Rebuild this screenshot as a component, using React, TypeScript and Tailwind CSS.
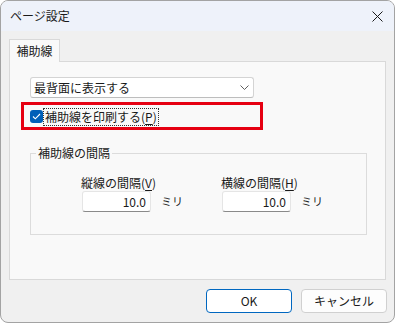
import React from "react";

const font = "font-['Noto_Sans_CJK_JP','Noto_Sans',sans-serif]";

const SpacingField: React.FC<{ label: string; accel: string; value: string }> = ({
  label,
  accel,
  value,
}) => (
  <div className="flex w-[140px] flex-col">
    <div className="ml-[-1px] h-[16px] text-[12px] leading-[16px] text-[#1a1a1a]">
      {label}(<span className="underline underline-offset-2">{accel}</span>)
    </div>
    <div className="flex items-center">
      <div className="flex h-[21px] w-[69px] items-center justify-end rounded-[3px] border border-[#e5e5e5] border-b-[#8a8a8a] bg-white pr-[4px] text-[12px] text-[#1a1a1a]">
        {value}
      </div>
      <span className="ml-[10px] text-[11px] text-[#1a1a1a]">ミリ</span>
    </div>
  </div>
);

const App: React.FC = () => {
  return (
    <div className={`h-[323px] w-[395px] bg-white ${font}`}>
      <div className="flex h-full flex-col overflow-hidden rounded-[8px] border border-[#a3a3a3] bg-[#f0f0f0]">
        {/* Title bar */}
        <div className="flex h-[30px] shrink-0 items-center justify-between bg-[#eef2fa] pl-[9px] pr-[10px]">
          <span className="text-[12px] text-[#1a1a1a]">ページ設定</span>
          <svg width="11" height="11" viewBox="0 0 11 11" className="mr-[1px]">
            <path d="M0.5 0.5 L10.5 10.5 M10.5 0.5 L0.5 10.5" stroke="#1a1a1a" strokeWidth="1" />
          </svg>
        </div>

        {/* Body */}
        <div className="pl-[8px] pt-[8px]">
          <div className="relative z-10 -mb-px flex h-[23px] w-[51px] items-center justify-center border border-b-0 border-[#d9d9d9] bg-[#f9f9f9] text-[12px] text-[#1a1a1a]">
            補助線
          </div>
          <div className="flex h-[219px] w-[377px] flex-col border border-[#d9d9d9] bg-[#f9f9f9]">
            {/* Combo box */}
            <div className="ml-[20px] mt-[15px] flex h-[21px] w-[224px] items-center justify-between rounded-[3px] border border-[#d4d4d4] border-b-[#bdbdbd] bg-white pl-[3px] pr-[4px] text-[12px] text-[#1a1a1a]">
              <span>最背面に表示する</span>
              <svg width="9" height="5" viewBox="0 0 9 5">
                <path d="M0.5 0.5 L4.5 4.5 L8.5 0.5" fill="none" stroke="#5f5f5f" strokeWidth="1" />
              </svg>
            </div>

            {/* Highlighted checkbox row */}
            <div className="ml-[11px] mt-[4px] flex h-[28px] w-[242px] items-center border-[3px] border-[#e60012] pl-[6px] pt-[1px]">
              <div className="flex h-[13px] w-[13px] items-center justify-center rounded-[3px] bg-[#005fb8]">
                <svg width="9" height="7" viewBox="0 0 9 7">
                  <path d="M1 3.5 L3.3 5.8 L8 1" fill="none" stroke="white" strokeWidth="1.1" />
                </svg>
              </div>
              <span className="ml-[1px] h-[16px] px-[1px] text-[12px] leading-[15px] text-[#1a1a1a] outline-1 outline-dotted outline-[#333]">
                補助線を印刷する(<span className="underline underline-offset-2">P</span>)
              </span>
            </div>

            {/* Group box */}
            <fieldset className="ml-[20px] mt-[15px] h-[90px] w-[337px] border border-[#dcdcdc]">
              <legend className="ml-[5px] h-[16px] px-[2px] text-[12px] leading-[16px] text-[#1a1a1a]">
                補助線の間隔
              </legend>
              <div className="flex pl-[51px] pt-[14px]">
                <SpacingField label="縦線の間隔" accel="V" value="10.0" />
                <SpacingField label="横線の間隔" accel="H" value="10.0" />
              </div>
            </fieldset>
          </div>
        </div>

        {/* Buttons */}
        <div className="mt-[9px] flex justify-end gap-[9px] pr-[7px]">
          <button className="flex h-[24px] w-[86px] items-center justify-center rounded-[4px] border border-[#0067c0] bg-white text-[12px] text-[#1a1a1a]">
            OK
          </button>
          <button className="flex h-[24px] w-[86px] items-center justify-center rounded-[4px] border border-[#d0d0d0] bg-[#fdfdfd] text-[12px] text-[#1a1a1a]">
            キャンセル
          </button>
        </div>
      </div>
    </div>
  );
};

export default App;
